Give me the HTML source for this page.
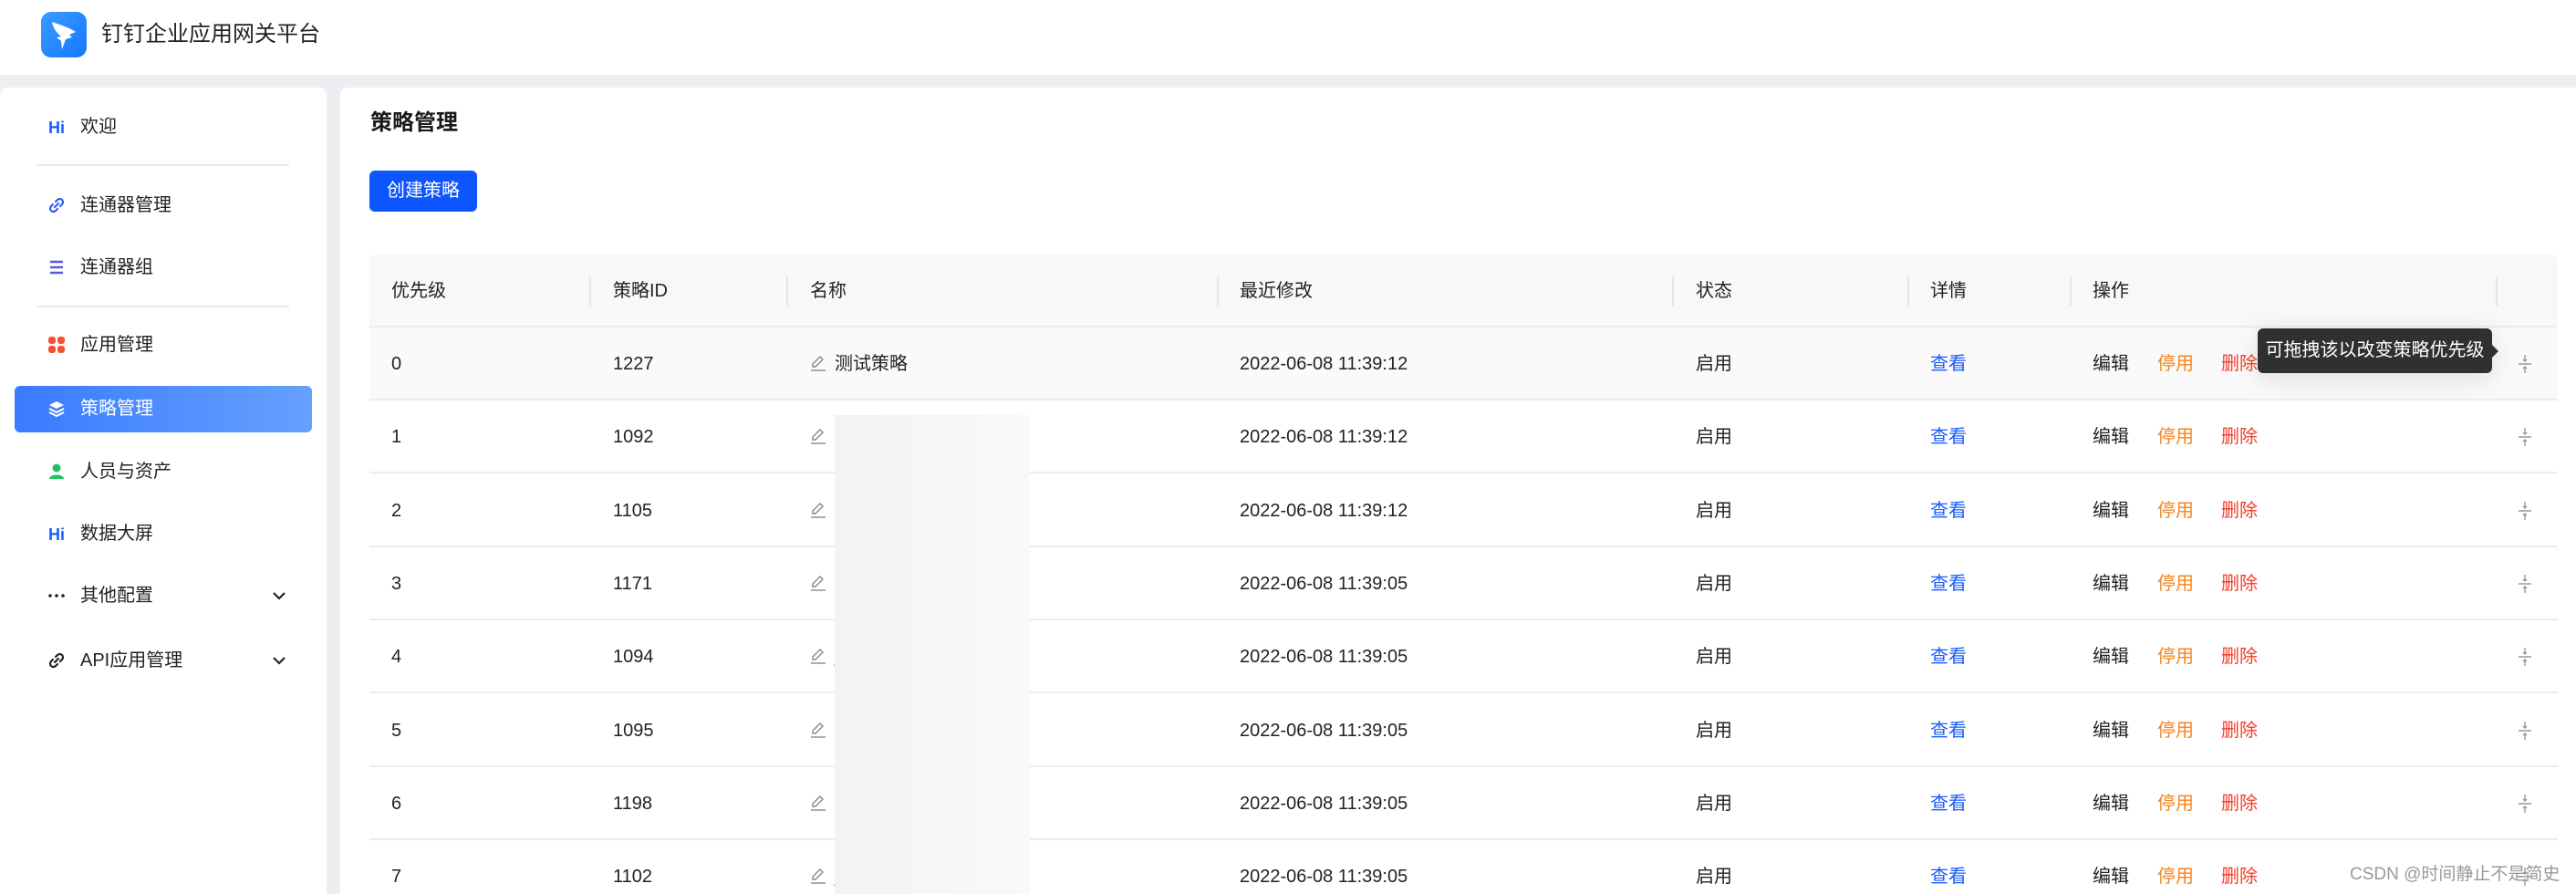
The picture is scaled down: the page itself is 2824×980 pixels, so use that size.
<!DOCTYPE html>
<html style="width:2824px;height:980px;overflow:hidden"><head><meta charset="utf-8"><style>
*{margin:0;padding:0;box-sizing:border-box}
body{width:2824px;height:980px;overflow:hidden;background:#eceef2;font-family:"Liberation Sans","Noto Sans CJK SC",sans-serif;color:#222;position:relative}
.a{position:absolute}
.hdr{left:0;top:0;width:2824px;height:82px;background:#fff}
.side{left:0;top:96px;width:358px;height:884px;background:#fff;border-radius:8px 8px 0 0}
.main{left:373px;top:96px;width:2451px;height:884px;background:#fff;border-radius:8px 0 0 0}
.mi{left:0;width:358px;height:50px;font-size:20px;line-height:50px;color:#222}
.mi .ic{position:absolute;left:52px;top:15px;width:20px;height:20px}
.mi .t{position:absolute;left:88px;top:0}
.mi .ch{position:absolute;left:298px;top:17px}
.div{left:40px;width:277px;height:2px;background:#e9e9ea}
.cell{position:absolute;font-size:20px;line-height:20px;top:30px}
.row{left:405px;width:2399px;height:80px;border-bottom:2px solid #ececec}
.sep{position:absolute;top:24px;width:2px;height:32px;background:#e5e5e5}
#clip{position:absolute;left:0;top:0;width:2824px;height:980px;overflow:hidden}
</style></head><body><div id="clip">
<div class="a hdr"></div>
<div class="a" style="left:45px;top:13px;width:50px;height:50px;border-radius:11px;background:linear-gradient(135deg,#3a9bff,#1677ff)">
<svg width="50" height="50" viewBox="0 0 50 50"><path d="M12 11 C20 14 31 17 38 22 L31 25 L34 28 L27 30 L23 41 L22 32 L17 28 L22 27 C16 22 13 17 12 11Z" fill="#fff"/></svg></div>
<div class="a" style="left:111px;top:24px;font-size:24px;line-height:28px;color:#222">钉钉企业应用网关平台</div>

<div class="a side"></div>
<div class="a main"></div>

<div class="a mi" style="top:114px"><span class="ic" style="color:#1a5cff;font-weight:bold;font-size:18px;line-height:20px;top:16px;left:53px">Hi</span><span class="t">欢迎</span></div>
<div class="a div" style="top:180px"></div>
<div class="a mi" style="top:200px"><svg class="ic" viewBox="0 0 20 20"><path d="M8 12 L12 8 M9 6 L11 4 A3 3 0 0 1 16 9 L14 11 M11 14 L9 16 A3 3 0 0 1 4 11 L6 9" stroke="#2d5bff" stroke-width="2.2" fill="none" stroke-linecap="round"/></svg><span class="t">连通器管理</span></div>
<div class="a mi" style="top:268px"><svg class="ic" viewBox="0 0 20 20"><path d="M3 4H17M3 10H17M3 16H17" stroke="#5a5ae0" stroke-width="2.4"/></svg><span class="t">连通器组</span></div>
<div class="a div" style="top:335px"></div>
<div class="a mi" style="top:353px"><svg class="ic" viewBox="0 0 20 20"><g fill="#f5502d"><rect x="1" y="1" width="8" height="8" rx="3"/><rect x="11" y="1" width="8" height="8" rx="3"/><rect x="1" y="11" width="8" height="8" rx="3"/><rect x="11" y="11" width="8" height="8" rx="3"/></g></svg><span class="t">应用管理</span></div>
<div class="a" style="left:16px;top:423px;width:326px;height:51px;border-radius:6px;background:linear-gradient(90deg,#3a7bff,#66a0ff)"></div>
<div class="a mi" style="top:423px;color:#fff"><svg class="ic" viewBox="0 0 20 20"><path d="M10 2 L18 6 L10 10 L2 6Z" fill="#fff"/><path d="M2 10 L10 14 L18 10 M2 14 L10 18 L18 14" stroke="#fff" stroke-width="2" fill="none"/></svg><span class="t" style="color:#fff">策略管理</span></div>
<div class="a mi" style="top:492px"><svg class="ic" viewBox="0 0 20 20"><circle cx="10" cy="6" r="4.5" fill="#22c062"/><path d="M2 18 C2 12 18 12 18 18Z" fill="#22c062"/></svg><span class="t">人员与资产</span></div>
<div class="a mi" style="top:560px"><span class="ic" style="color:#1a5cff;font-weight:bold;font-size:18px;line-height:20px;top:16px;left:53px">Hi</span><span class="t">数据大屏</span></div>
<div class="a mi" style="top:628px"><svg class="ic" viewBox="0 0 20 20"><g fill="#222"><circle cx="3" cy="10" r="1.8"/><circle cx="10" cy="10" r="1.8"/><circle cx="17" cy="10" r="1.8"/></g></svg><span class="t">其他配置</span><svg class="ch" width="16" height="16" viewBox="0 0 16 16"><path d="M2 5 L8 11 L14 5" stroke="#222" stroke-width="2.2" fill="none"/></svg></div>
<div class="a mi" style="top:699px"><svg class="ic" viewBox="0 0 20 20"><path d="M8 12 L12 8 M9 6 L11 4 A3 3 0 0 1 16 9 L14 11 M11 14 L9 16 A3 3 0 0 1 4 11 L6 9" stroke="#222" stroke-width="2.2" fill="none" stroke-linecap="round"/></svg><span class="t">API应用管理</span><svg class="ch" width="16" height="16" viewBox="0 0 16 16"><path d="M2 5 L8 11 L14 5" stroke="#222" stroke-width="2.2" fill="none"/></svg></div>

<div class="a" style="left:406px;top:120px;font-size:24px;font-weight:bold;line-height:30px;color:#1a1a1a">策略管理</div>
<div class="a" style="left:405px;top:187px;width:118px;height:45px;border-radius:6px;background:#0d55ff;color:#fff;font-size:20px;line-height:45px;text-align:center">创建策略</div>

<div class="a" style="left:405px;top:279px;width:2399px;height:80px;background:#f8f8f8;border-radius:8px 8px 0 0;border-bottom:2px solid #ececec">
<span class="cell" style="left:24px">优先级</span><span class="sep" style="left:241px"></span>
<span class="cell" style="left:267px">策略ID</span><span class="sep" style="left:457px"></span>
<span class="cell" style="left:483px">名称</span><span class="sep" style="left:929px"></span>
<span class="cell" style="left:954px">最近修改</span><span class="sep" style="left:1428px"></span>
<span class="cell" style="left:1454px">状态</span><span class="sep" style="left:1686px"></span>
<span class="cell" style="left:1711px">详情</span><span class="sep" style="left:1864px"></span>
<span class="cell" style="left:1889px">操作</span><span class="sep" style="left:2331px"></span>
</div>

<div id="rows"></div>
<script>
var d=[["0","1227","测试策略","2022-06-08 11:39:12"],["1","1092","A","2022-06-08 11:39:12"],["2","1105","t","2022-06-08 11:39:12"],["3","1171","t","2022-06-08 11:39:05"],["4","1094","j","2022-06-08 11:39:05"],["5","1095","t","2022-06-08 11:39:05"],["6","1198","t","2022-06-08 11:39:05"],["7","1102","j","2022-06-08 11:39:05"]];
var h="";
d.forEach(function(r,i){
var top=359+i*80.3;
h+='<div class="a row" style="top:'+top+'px;'+(i==0?'background:#fafafa;':'')+'">'+
'<span class="cell" style="left:24px">'+r[0]+'</span>'+
'<span class="cell" style="left:267px">'+r[1]+'</span>'+
'<svg style="position:absolute;left:482px;top:29px" width="20" height="20" viewBox="0 0 20 20"><path d="M4 14 L4 11 L12 3 L15 6 L7 14Z" stroke="#888" stroke-width="1.4" fill="none"/><path d="M2 18H18" stroke="#888" stroke-width="1.4"/></svg>'+
'<span class="cell" style="left:510px">'+r[2]+'</span>'+
'<span class="cell" style="left:954px">'+r[3]+'</span>'+
'<span class="cell" style="left:1454px">启用</span>'+
'<span class="cell" style="left:1711px;color:#1a5cff">查看</span>'+
'<span class="cell" style="left:1889px">编辑</span>'+
'<span class="cell" style="left:1960px;color:#f5841f">停用</span>'+
'<span class="cell" style="left:2030px;color:#f23d2a">删除</span>'+
'<svg style="position:absolute;left:2355px;top:28px" width="16" height="24" viewBox="0 0 16 24"><path d="M1 12H15M8 2V9M8 15V22M6 7L8 9L10 7M6 17L8 15L10 17" stroke="#999" stroke-width="1.4" fill="none"/></svg>'+
'</div>';});
document.getElementById("rows").innerHTML=h;
</script>
<div class="a" style="left:915px;top:455px;width:214px;height:525px;background:linear-gradient(90deg,#f2f3f4,#f6f6f7 50%,#f9f9f9)"></div>
<div class="a" style="left:2475px;top:360px;width:257px;height:49px;background:#303030;border-radius:6px;color:#fff;font-size:20px;line-height:49px;text-align:center;box-shadow:0 6px 30px rgba(0,0,0,.12)">可拖拽该以改变策略优先级</div>
<div class="a" style="left:2732px;top:378px;width:0;height:0;border-top:7px solid transparent;border-bottom:7px solid transparent;border-left:7px solid #303030"></div>
<div class="a" style="left:2576px;top:948px;font-size:19px;color:#999;line-height:22px">CSDN @时间静止不是简史</div>
</div></body></html>
